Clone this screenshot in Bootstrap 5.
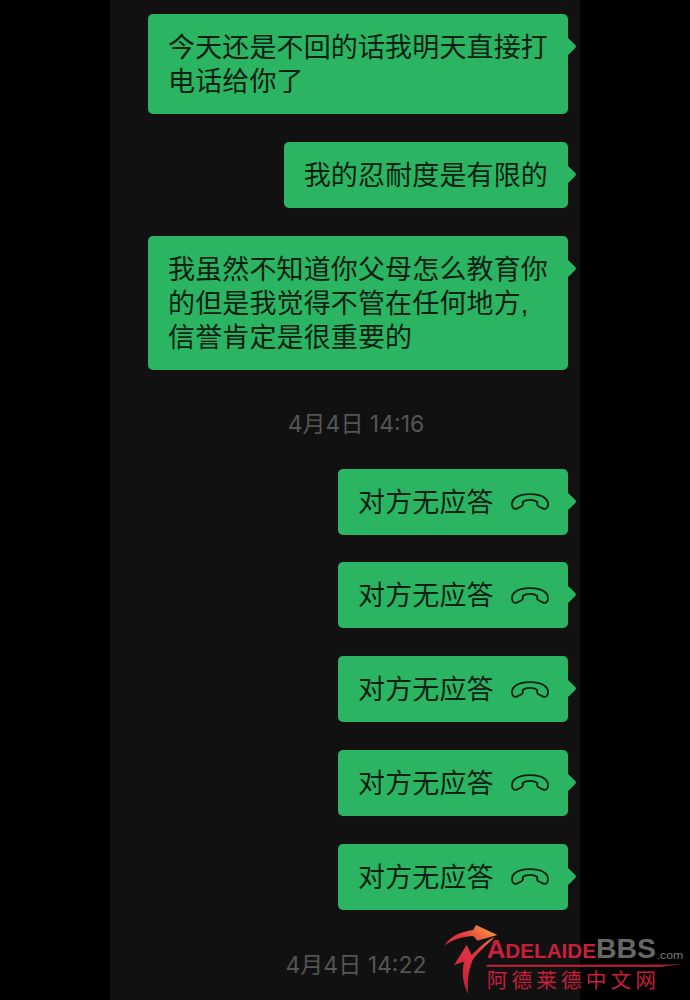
<!DOCTYPE html>
<html lang="zh">
<head>
    <meta charset="UTF-8">
    <meta name="viewport" content="width=device-width, initial-scale=1.0">
    <title>聊天记录</title>
    <link href="https://cdn.jsdelivr.net/npm/bootstrap@5.3.0/dist/css/bootstrap.min.css" rel="stylesheet">
    <style>
        html, body {
            height: 1000px;
            overflow: hidden;
        }
        body {
            background-color: #000;
            font-family: "Liberation Sans", "Noto Sans CJK SC", sans-serif;
        }
        .chat-column {
            width: 470px;
            height: 1000px;
            margin-left: 110px;
            padding: 14px 12px 0 0;
            background-color: #111;
            overflow: hidden;
        }
        .bubble {
            position: relative;
            max-width: 420px;
            padding: 17px 20px 15px;
            margin-bottom: 28px;
            border-radius: 5px;
            background-color: #2bb562;
            color: #0b2114;
            font-size: 27px;
            letter-spacing: .14px;
            line-height: 34px;
        }
        .bubble-call {
            height: 66px;
            margin-bottom: 27.75px;
        }
        .bubble::after {
            content: "";
            position: absolute;
            top: 26px;
            right: -6px;
            width: 13px;
            height: 13px;
            border-radius: 2px;
            background-color: #2bb562;
            transform: rotate(45deg);
        }
        .call-icon {
            width: 40px;
            height: 19px;
            margin: -2px -2px 0 16.3px;
        }
        .time-label {
            padding: 9.7px 0 0 34px;
            margin-bottom: 28px;
            color: #555;
            font-family: Inter, "Noto Sans CJK SC", sans-serif;
            font-size: 23px;
            line-height: 33px;
        }
        .time-label-last {
            padding-top: 11.5px;
        }
        .site-logo {
            position: absolute;
            left: 430px;
            top: 915px;
            width: 260px;
            height: 85px;
        }
        .logo-main { font-family: "Liberation Sans", sans-serif; font-weight: 700; }
        .logo-cn { font-family: "Noto Sans CJK SC", sans-serif; }
    </style>
</head>
<body>
    <svg width="0" height="0" class="d-block">
        <symbol id="hangup" viewBox="0 0 38 18">
            <path fill="none" stroke="#0b2114" stroke-width="1.7" stroke-linejoin="round" d="M2 13C1 8 5 2 19 2C33 2 37 8 36 13C35.5 16 33 16.5 31 15.5L27 13.5C25.5 12.5 25.5 11 26 9.5C24 8 21.5 7.5 19 7.5C16.5 7.5 14 8 12 9.5C12.5 11 12.5 12.5 11 13.5L7 15.5C5 16.5 2.5 16 2 13Z"/>
        </symbol>
    </svg>

    <div class="chat-column d-flex flex-column">
        <div class="d-flex justify-content-end"><div class="bubble">今天还是不回的话我明天直接打电话给你了</div></div>
        <div class="d-flex justify-content-end"><div class="bubble">我的忍耐度是有限的</div></div>
        <div class="d-flex justify-content-end"><div class="bubble">我虽然不知道你父母怎么教育你的但是我觉得不管在任何地方,信誉肯定是很重要的</div></div>

        <div class="time-label text-center">4月4日 14:16</div>

        <div class="d-flex justify-content-end">
            <div class="bubble bubble-call d-flex align-items-center">对方无应答<svg class="call-icon"><use href="#hangup"/></svg></div>
        </div>
        <div class="d-flex justify-content-end">
            <div class="bubble bubble-call d-flex align-items-center">对方无应答<svg class="call-icon"><use href="#hangup"/></svg></div>
        </div>
        <div class="d-flex justify-content-end">
            <div class="bubble bubble-call d-flex align-items-center">对方无应答<svg class="call-icon"><use href="#hangup"/></svg></div>
        </div>
        <div class="d-flex justify-content-end">
            <div class="bubble bubble-call d-flex align-items-center">对方无应答<svg class="call-icon"><use href="#hangup"/></svg></div>
        </div>
        <div class="d-flex justify-content-end">
            <div class="bubble bubble-call d-flex align-items-center">对方无应答<svg class="call-icon"><use href="#hangup"/></svg></div>
        </div>

        <div class="time-label time-label-last text-center">4月4日 14:22</div>
    </div>

    <!-- 水印 -->
    <svg class="site-logo" viewBox="0 0 780 255">
        <defs>
            <linearGradient id="swoosh" gradientUnits="userSpaceOnUse" x1="60" y1="200" x2="200" y2="40">
                <stop offset="0" stop-color="#c81a3c"/>
                <stop offset="0.6" stop-color="#e23a40"/>
                <stop offset="1" stop-color="#f5a23c"/>
            </linearGradient>
        </defs>
        <path fill="url(#swoosh)" d="M42 93C60 65 90 50 130 45L138 30L202 60L142 77L130 63C95 65 65 75 42 93Z"/>
        <path fill="url(#swoosh)" d="M115 237C100 210 94 175 102 140L72 150L110 90L125 120C145 100 170 75 195 65C170 90 145 110 128 135C116 165 110 200 115 237Z"/>
        <text class="logo-main" x="170" y="130" font-size="77" fill="#c8203a" textLength="56" lengthAdjust="spacingAndGlyphs">A</text>
        <text class="logo-main" x="226" y="130" font-size="58" fill="#c8203a" textLength="272" lengthAdjust="spacingAndGlyphs">DELAIDE</text>
        <text class="logo-main" x="498" y="130" font-size="84" fill="#666" textLength="180" lengthAdjust="spacingAndGlyphs">BBS</text>
        <text x="680" y="131" font-size="30" fill="#777" textLength="80" lengthAdjust="spacingAndGlyphs" font-family="Liberation Sans, sans-serif">.com</text>
        <path fill="#c8203a" d="M170 149H700L756 148L690 155H170Z"/>
        <text class="logo-cn" x="170" y="220" font-size="62" fill="#c41e3a" textLength="508" lengthAdjust="spacing">阿德莱德中文网</text>
    </svg>
</body>
</html>
